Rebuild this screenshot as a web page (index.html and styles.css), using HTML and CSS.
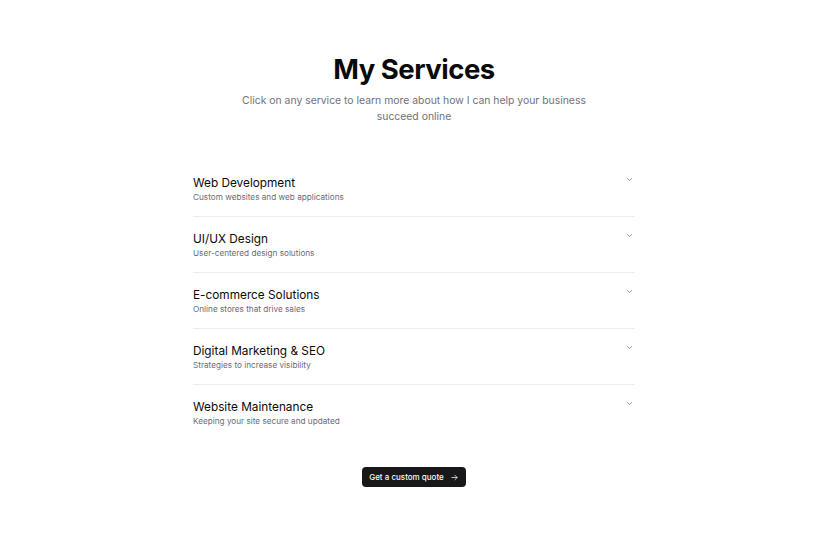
FILE: index.html
```html
<!DOCTYPE html>
<html>
<head>
<meta charset="utf-8">
<link rel="stylesheet" href="styles.css">
</head>
<body>
<main class="page">
  <header class="head">
    <h1 class="title">My Services</h1>
    <p class="lead">Click on any service to learn more about how I can help your business succeed online</p>
  </header>
  <ul class="list">
    <li class="item">
      <div class="text"><div class="name">Web Development</div><div class="desc">Custom websites and web applications</div></div>
      <svg class="chev" viewBox="0 0 24 24"><path d="M6 9l6 6 6-6"/></svg>
    </li>
    <li class="item">
      <div class="text"><div class="name">UI/UX Design</div><div class="desc">User-centered design solutions</div></div>
      <svg class="chev" viewBox="0 0 24 24"><path d="M6 9l6 6 6-6"/></svg>
    </li>
    <li class="item">
      <div class="text"><div class="name">E-commerce Solutions</div><div class="desc">Online stores that drive sales</div></div>
      <svg class="chev" viewBox="0 0 24 24"><path d="M6 9l6 6 6-6"/></svg>
    </li>
    <li class="item">
      <div class="text"><div class="name">Digital Marketing &amp; SEO</div><div class="desc">Strategies to increase visibility</div></div>
      <svg class="chev" viewBox="0 0 24 24"><path d="M6 9l6 6 6-6"/></svg>
    </li>
    <li class="item last">
      <div class="text"><div class="name">Website Maintenance</div><div class="desc">Keeping your site secure and updated</div></div>
      <svg class="chev" viewBox="0 0 24 24"><path d="M6 9l6 6 6-6"/></svg>
    </li>
  </ul>
  <div class="cta">
    <button class="btn">Get a custom quote <svg class="arrow" viewBox="0 0 24 24"><path d="M5 12h14M13 6l6 6-6 6"/></svg></button>
  </div>
</main>
</body>
</html>
```
FILE: styles.css
```css
* { box-sizing: border-box; }
html, body { margin: 0; padding: 0; background: #fff; }
body { font-family: Inter, "Noto Sans", sans-serif; color: #0a0a0a; }
.page { width: 442px; margin: 0 auto; padding-top: 51px; }
.head { text-align: center; }
.title { margin: 0; font-size: 27.5px; line-height: 36px; font-weight: 700; letter-spacing: -0.5px; color: #0a0a0a; }
.lead { margin: 6px auto 0; max-width: 360px; font-size: 10.4px; line-height: 16px; color: #71717a; }
.list { list-style: none; margin: 36px 0 0; padding: 0; }
.item { display: flex; justify-content: space-between; align-items: flex-start; padding: 13px 0 15px; border-bottom: 1px solid #ececee; height: 56px; }
.item.last { border-bottom: none; }
.name { font-size: 11.8px; line-height: 18px; font-weight: 400; color: #0a0a0a; }
.desc { font-size: 8.2px; line-height: 10px; color: #6b6b74; }
.chev { width: 9px; height: 9px; margin-top: 1px; margin-right: 1px; fill: none; stroke: #71717a; stroke-width: 2; stroke-linecap: round; stroke-linejoin: round; }
.cta { display: flex; justify-content: center; margin-top: 26px; }
.btn { display: inline-flex; align-items: center; gap: 6px; height: 20px; padding: 0 7px 0 7px; border: none; border-radius: 4px; background: #18181b; color: #fafafa; font-family: Inter, sans-serif; font-size: 8px; font-weight: 500; }
.arrow { width: 9px; height: 9px; fill: none; stroke: #fafafa; stroke-width: 2; stroke-linecap: round; stroke-linejoin: round; }
```
